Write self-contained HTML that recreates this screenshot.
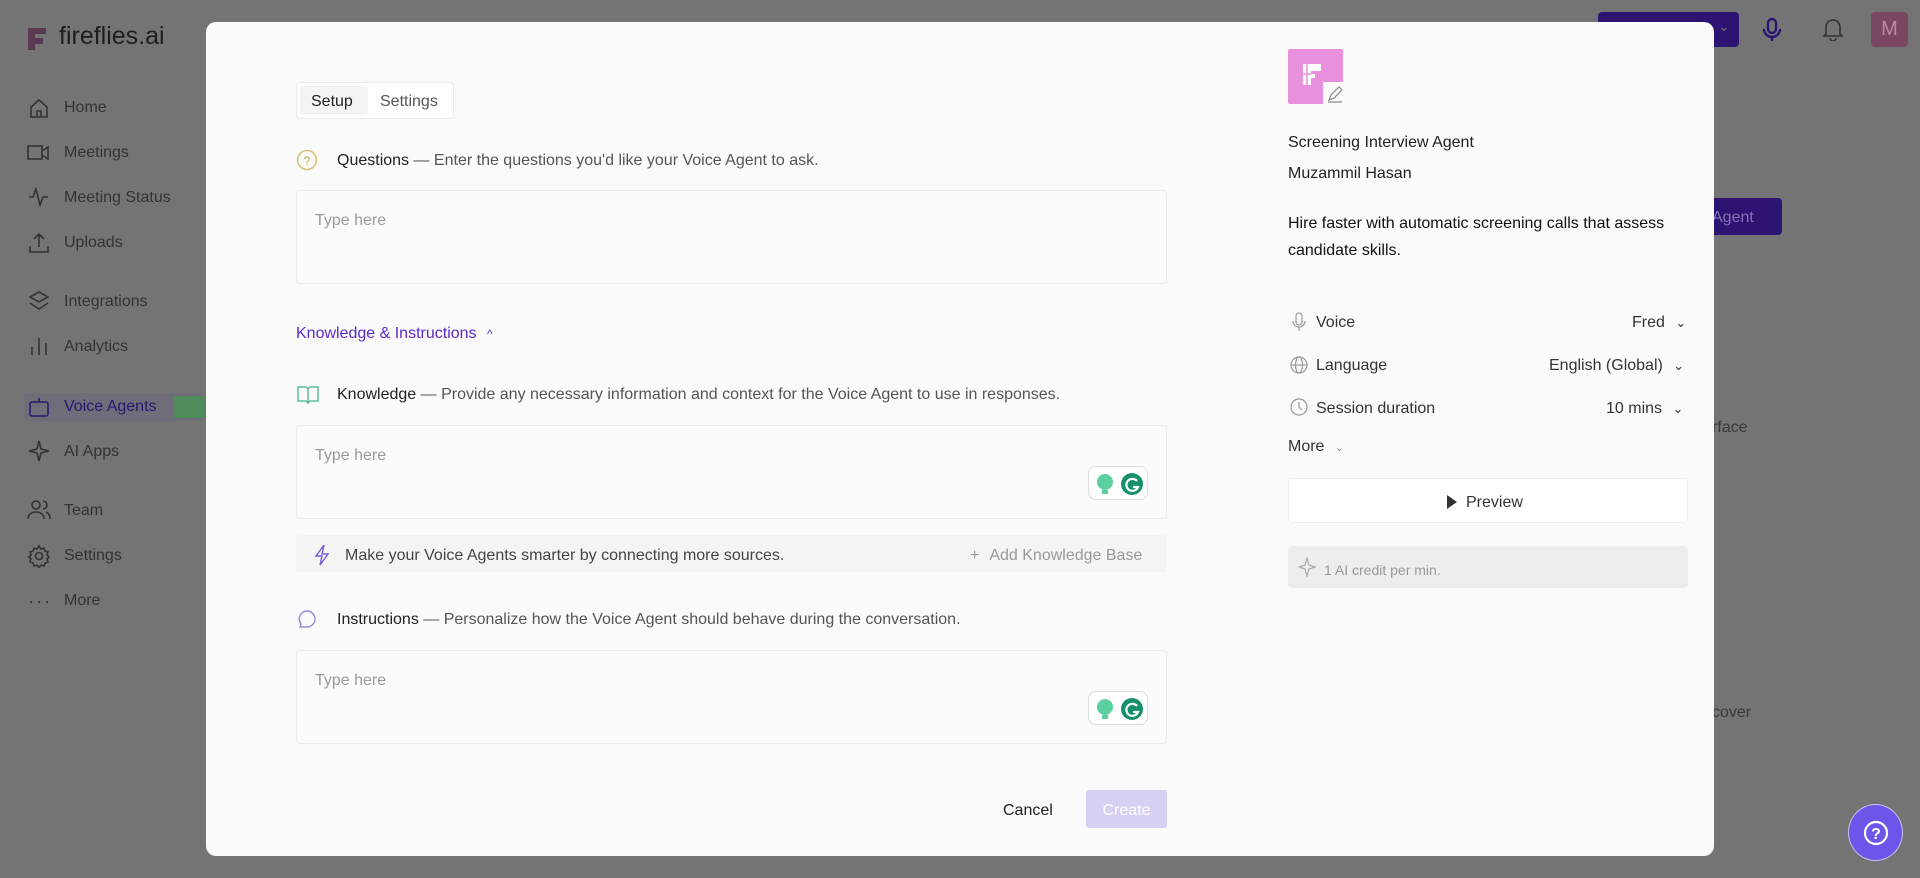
<!DOCTYPE html>
<html><head><meta charset="utf-8"><style>
*{margin:0;padding:0;box-sizing:border-box}
body{width:1920px;height:878px;overflow:hidden;background:#747474;font-family:"Liberation Sans",sans-serif;position:relative;color:#222}
.a{position:absolute;white-space:nowrap}
.side{color:#333;font-size:16px;margin-top:3px}
.ic{position:absolute;stroke:#333;fill:none;stroke-width:1.6}
.modal{position:absolute;left:206px;top:22px;width:1508px;height:834px;background:#fafafa;border-radius:10px}
.m{position:absolute;white-space:nowrap}
.t{margin-top:3px}
.ta{position:absolute;left:90px;width:871px;border:1px solid #ececec;border-radius:4px;background:#fbfbfb}
.ph{position:absolute;left:18px;top:21px;color:#9a9a9a;font-size:16px}
.g{position:absolute;right:18px;width:60px;height:34px;border:1px solid #ddd;border-radius:8px;background:#fff}
.lbl{font-size:16px;color:#222;margin-top:3px}
.sub{color:#555}
.row{font-size:16px;color:#333;margin-top:3px}
</style></head><body>
<!-- sidebar -->
<div class="a" style="left:26px;top:26px;width:22px;height:24px">
<svg width="22" height="26"><path d="M2 2h18v6H9v4h8v6H9v6H2z" fill="#5a3a52"/></svg></div>
<div class="a" style="left:59px;top:22px;font-size:25px;color:#1e1e1e">fireflies.ai</div>
<svg class="ic" style="left:28px;top:97px" width="22" height="22"><path d="M3 10L11 3l8 7v10H3z M9 20v-6h4v6"/></svg>
<div class="a side" style="left:64px;top:96px">Home</div>
<svg class="ic" style="left:27px;top:143px" width="24" height="20"><rect x="1" y="3" width="14" height="13"/><path d="M15 8l6-4v12l-6-4"/></svg>
<div class="a side" style="left:64px;top:141px">Meetings</div>
<svg class="ic" style="left:28px;top:187px" width="22" height="20"><path d="M1 10h4l3-8 4 16 3-8h5"/></svg>
<div class="a side" style="left:64px;top:186px">Meeting Status</div>
<svg class="ic" style="left:28px;top:232px" width="22" height="22"><path d="M11 15V2M6 7l5-5 5 5M2 14v6h18v-6"/></svg>
<div class="a side" style="left:64px;top:231px">Uploads</div>
<svg class="ic" style="left:28px;top:290px" width="22" height="22"><path d="M11 2l9 5-9 5-9-5z M2 13l9 6 9-6"/></svg>
<div class="a side" style="left:64px;top:290px">Integrations</div>
<svg class="ic" style="left:28px;top:335px" width="22" height="22"><path d="M4 20v-8M11 20V3M18 20v-12"/></svg>
<div class="a side" style="left:64px;top:335px">Analytics</div>
<div class="a" style="left:24px;top:393px;width:180px;height:28px;background:#6f6d79;border-radius:4px"></div>
<div class="a" style="left:174px;top:396px;width:32px;height:22px;background:#4e8a5a"></div>
<svg class="ic" style="left:28px;top:396px;stroke:#2a1a6a" width="22" height="22"><rect x="2" y="6" width="18" height="14" rx="2"/><path d="M11 6V2"/></svg>
<div class="a side" style="left:64px;top:395px;color:#2a1670">Voice Agents</div>
<svg class="ic" style="left:28px;top:440px" width="22" height="22"><path d="M11 1l2 8 8 2-8 2-2 8-2-8-8-2 8-2z"/></svg>
<div class="a side" style="left:64px;top:440px">AI Apps</div>
<svg class="ic" style="left:27px;top:499px" width="24" height="22"><circle cx="9" cy="6" r="4"/><path d="M1 20c0-5 4-7 8-7s8 2 8 7M16 2a4 4 0 010 8M19 13c2 1 4 3 4 7"/></svg>
<div class="a side" style="left:64px;top:499px">Team</div>
<svg class="ic" style="left:27px;top:544px" width="24" height="24"><circle cx="12" cy="12" r="3.5"/><path d="M12 2l2 3 3-1 1 3 3 1-1 3 2 2-2 2 1 3-3 1-1 3-3-1-2 3-2-3-3 1-1-3-3-1 1-3-2-2 2-2-1-3 3-1 1-3 3 1z"/></svg>
<div class="a side" style="left:64px;top:544px">Settings</div>
<div class="a side" style="left:28px;top:588px;font-size:18px;letter-spacing:2px">···</div>
<div class="a side" style="left:64px;top:589px">More</div>
<!-- top right -->
<div class="a" style="left:1598px;top:12px;width:141px;height:35px;background:#2d1472;border-radius:4px"></div>
<div class="a" style="left:1718px;top:18px;color:#777;font-size:14px">⌄</div>
<svg class="ic" style="left:1762px;top:17px;stroke:#2d1472;stroke-width:2.4" width="20" height="26"><rect x="6" y="2" width="8" height="14" rx="4"/><path d="M2 12a8 8 0 0016 0M10 20v4"/></svg>
<svg class="ic" style="left:1822px;top:17px" width="22" height="24"><path d="M4 17V10a7 7 0 0114 0v7l2 2H2z M8 21a3 3 0 006 0"/></svg>
<div class="a" style="left:1871px;top:12px;width:37px;height:35px;background:#7a4660;border-radius:4px;color:#bb8aa2;font-size:20px;text-align:center;line-height:35px">M</div>
<div class="a" style="left:1700px;top:198px;width:82px;height:37px;background:#2d1472;border-radius:4px;color:#8870b8;font-size:16px;line-height:40px;padding-left:12px">Agent</div>
<div class="a" style="left:1712px;top:419px;color:#3a3a3a;font-size:16px">rface</div>
<div class="a" style="left:1712px;top:704px;color:#3a3a3a;font-size:16px">cover</div>
<div class="a" style="left:1848px;top:804px;width:55px;height:57px;border-radius:50%;background:#6c55e8;border:1px solid #c8c0f0"></div>
<svg class="a" style="left:1862px;top:819px" width="28" height="28"><circle cx="14" cy="14" r="11" fill="none" stroke="#fff" stroke-width="2.2"/><text x="14" y="20" font-size="16" font-weight="bold" fill="#fff" text-anchor="middle" font-family="Liberation Sans">?</text></svg>

<div class="modal">
 <!-- tabs -->
 <div class="m" style="left:90px;top:60px;width:158px;height:37px;border:1px solid #eaeaea;border-radius:4px;background:#fff"></div>
 <div class="m" style="left:94px;top:64px;width:68px;height:29px;background:#f4f4f4;border-radius:3px"></div>
 <div class="m t" style="left:105px;top:68px;font-size:16px;color:#222">Setup</div>
 <div class="m t" style="left:174px;top:68px;font-size:16px;color:#555">Settings</div>
 <!-- questions -->
 <svg class="m" style="left:90px;top:127px" width="22" height="22"><circle cx="11" cy="11" r="9.5" fill="none" stroke="#d8c078" stroke-width="1.5"/><text x="11" y="16" font-size="12" fill="#c8a850" text-anchor="middle" font-family="Liberation Sans">?</text></svg>
 <div class="m lbl" style="left:131px;top:127px">Questions <span class="sub">— Enter the questions you'd like your Voice Agent to ask.</span></div>
 <div class="ta" style="top:168px;height:94px"><div class="ph">Type here</div></div>
 <div class="m t" style="left:90px;top:300px;font-size:16px;color:#5b2bc8">Knowledge &amp; Instructions <span style="font-size:12px;margin-left:6px">^</span></div>
 <!-- knowledge -->
 <svg class="m" style="left:90px;top:362px" width="24" height="20"><path d="M2 3h8l2 2 2-2h8v14h-8l-2 2-2-2H2z M12 5v14" fill="none" stroke="#5cc0a0" stroke-width="1.5"/></svg>
 <div class="m lbl" style="left:131px;top:361px">Knowledge <span class="sub">— Provide any necessary information and context for the Voice Agent to use in responses.</span></div>
 <div class="ta" style="top:403px;height:94px"><div class="ph">Type here</div>
  <div class="g" style="top:40px"><svg style="position:absolute;left:6px;top:5px" width="50" height="24"><circle cx="10" cy="10" r="8" fill="#5cd0a0"/><rect x="7" y="18" width="6" height="4" fill="#5cd0a0"/><circle cx="37" cy="12" r="11" fill="#15906a"/><path d="M42 9a6 6 0 10 1 6h-5" fill="none" stroke="#fff" stroke-width="2.2"/></svg></div>
 </div>
 <div class="m" style="left:90px;top:513px;width:871px;height:37px;background:#f4f4f4;border-radius:4px"></div>
 <svg class="m" style="left:108px;top:522px" width="16" height="22"><path d="M10 1L2 12h6l-2 9 8-11H8z" fill="none" stroke="#7a5ad8" stroke-width="1.4"/></svg>
 <div class="m t" style="left:139px;top:522px;font-size:16px;color:#444">Make your Voice Agents smarter by connecting more sources.</div>
 <div class="m t" style="left:764px;top:522px;font-size:16px;color:#999"><span style="margin-right:10px">+</span>Add Knowledge Base</div>
 <!-- instructions -->
 <svg class="m" style="left:90px;top:587px" width="22" height="22"><path d="M11 2a8 8 0 110 16H4l1-3a8 8 0 016-13z" fill="none" stroke="#9a8ad8" stroke-width="1.4"/></svg>
 <div class="m lbl" style="left:131px;top:586px">Instructions <span class="sub">— Personalize how the Voice Agent should behave during the conversation.</span></div>
 <div class="ta" style="top:628px;height:94px"><div class="ph">Type here</div>
  <div class="g" style="top:40px"><svg style="position:absolute;left:6px;top:5px" width="50" height="24"><circle cx="10" cy="10" r="8" fill="#5cd0a0"/><rect x="7" y="18" width="6" height="4" fill="#5cd0a0"/><circle cx="37" cy="12" r="11" fill="#15906a"/><path d="M42 9a6 6 0 10 1 6h-5" fill="none" stroke="#fff" stroke-width="2.2"/></svg></div>
 </div>
 <div class="m t" style="left:797px;top:777px;font-size:16px;color:#222">Cancel</div>
 <div class="m" style="left:880px;top:768px;width:81px;height:38px;background:#d8d0f4;border-radius:3px;color:#fff;font-size:16px;text-align:center;line-height:42px">Create</div>

 <!-- right panel -->
 <div class="m" style="left:1082px;top:27px;width:55px;height:55px;background:#e890dc;border-radius:2px"></div>
 <svg class="m" style="left:1096px;top:41px" width="22" height="24"><path d="M1 1h18v7H9v3h4v4H9v7H1z" fill="#fff"/><path d="M5 1v21M1 11h8" stroke="#e890dc" stroke-width="1.5"/></svg>
 <div class="m" style="left:1117px;top:60px;width:22px;height:24px;background:#fafafa"></div>
 <svg class="m" style="left:1120px;top:63px" width="18" height="18"><path d="M3 15l2-5 8-8 3 3-8 8z M2 17h14" fill="none" stroke="#888" stroke-width="1.2"/></svg>
 <div class="m t" style="left:1082px;top:109px;font-size:16px;color:#222">Screening Interview Agent</div>
 <div class="m t" style="left:1082px;top:140px;font-size:16px;color:#222">Muzammil Hasan</div>
 <div class="m t" style="left:1082px;top:185px;font-size:16px;color:#111;line-height:27px;white-space:normal;width:420px">Hire faster with automatic screening calls that assess candidate skills.</div>
 <svg class="m" style="left:1085px;top:290px" width="16" height="20"><rect x="5" y="1" width="6" height="12" rx="3" fill="none" stroke="#999" stroke-width="1.2"/><path d="M2 9a6 6 0 0012 0M8 15v4" fill="none" stroke="#999" stroke-width="1.2"/></svg>
 <div class="m row" style="left:1110px;top:289px">Voice</div>
 <div class="m row" style="left:1426px;top:289px">Fred <span style="margin-left:6px;font-size:13px">⌄</span></div>
 <svg class="m" style="left:1083px;top:333px" width="20" height="20"><circle cx="10" cy="10" r="8" fill="none" stroke="#999" stroke-width="1.2"/><ellipse cx="10" cy="10" rx="3.5" ry="8" fill="none" stroke="#999" stroke-width="1.2"/><path d="M2 10h16" stroke="#999" stroke-width="1.2"/></svg>
 <div class="m row" style="left:1110px;top:332px">Language</div>
 <div class="m row" style="left:1343px;top:332px">English (Global) <span style="margin-left:6px;font-size:13px">⌄</span></div>
 <svg class="m" style="left:1083px;top:375px" width="20" height="20"><circle cx="10" cy="10" r="8" fill="none" stroke="#999" stroke-width="1.2"/><path d="M10 5v5l3 3" fill="none" stroke="#999" stroke-width="1.2"/></svg>
 <div class="m row" style="left:1110px;top:375px">Session duration</div>
 <div class="m row" style="left:1400px;top:375px">10 mins <span style="margin-left:6px;font-size:13px">⌄</span></div>
 <div class="m row" style="left:1082px;top:413px">More <span style="margin-left:6px;font-size:11px;color:#888">⌄</span></div>
 <div class="m" style="left:1082px;top:456px;width:400px;height:45px;background:#fff;border:1px solid #eee;border-radius:3px"></div>
 <svg class="m" style="left:1240px;top:472px" width="12" height="16"><path d="M1 1l10 7-10 7z" fill="#333"/></svg>
 <div class="m t" style="left:1260px;top:469px;font-size:16px;color:#333">Preview</div>
 <div class="m" style="left:1082px;top:524px;width:400px;height:42px;background:#ededef;border-radius:4px"></div>
 <svg class="m" style="left:1092px;top:535px" width="18" height="20"><path d="M9 1l2 7 6 2-6 2-2 7-2-7-6-2 6-2z" fill="none" stroke="#aaa" stroke-width="1.2"/></svg>
 <div class="m t" style="left:1118px;top:537px;font-size:14px;color:#999">1 AI credit per min.</div>
</div>
</body></html>
